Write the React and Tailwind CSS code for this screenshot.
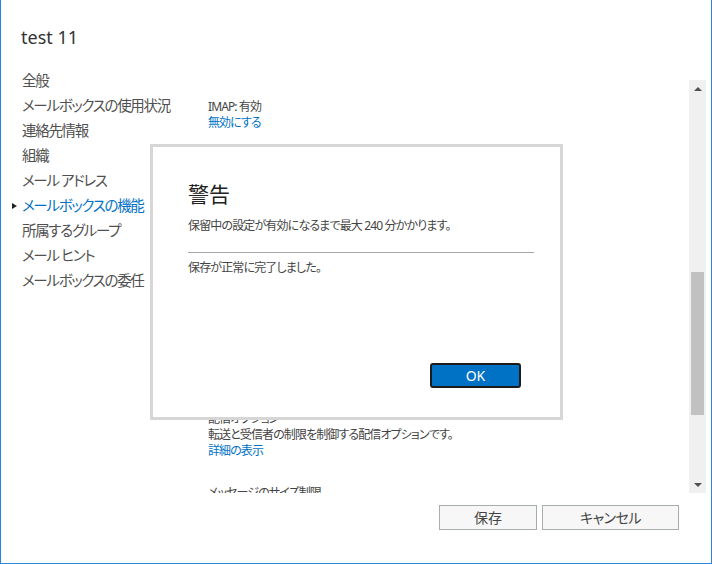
import React from "react";

const navItems = [
  "全般",
  "メールボックスの使用状況",
  "連絡先情報",
  "組織",
  "メール アドレス",
  "メールボックスの機能",
  "所属するグループ",
  "メール ヒント",
  "メールボックスの委任",
];

const ACTIVE = "メールボックスの機能";

export default function App() {
  return (
    <div
      className="relative w-[712px] h-[564px] overflow-hidden bg-white border-l border-r border-b border-[#2b88d8] text-[#444] [font-feature-settings:'palt']"
      style={{ fontFamily: '"Segoe UI", "Noto Sans", "Noto Sans CJK JP", sans-serif' }}
    >
      <div className="mt-[25px] pl-[20px] h-[24px] text-[18px] leading-[24px] text-[#333]">
        test 11
      </div>

      <div className="flex mt-[19px]">
        <ul className="w-[207px] shrink-0">
          {navItems.map((item) => (
            <li key={item} className="flex items-center h-[25px] text-[14.5px] leading-[25px] tracking-[-1.3px]">
              <span className="w-[21px] shrink-0 flex items-center pl-[11px]">
                {item === ACTIVE && (
                  <span className="block w-0 h-0 border-y-[3.5px] border-y-transparent border-l-[5px] border-l-[#222]" />
                )}
              </span>
              <span className={item === ACTIVE ? "text-[#0072c6]" : "text-[#505050]"}>{item}</span>
            </li>
          ))}
        </ul>

        <div className="mt-[12px] flex w-[498px] h-[413px] shrink-0">
          <div className="flex-1 overflow-hidden text-[12px] leading-[16px] tracking-[-0.9px] text-[#444]">
            <div className="pt-[19px]">
              <div>IMAP: 有効</div>
              <div className="text-[#0072c6]">無効にする</div>
            </div>
            <div className="h-[280px]" />
            <div>配信オプション</div>
            <div>転送と受信者の制限を制御する配信オプションです。</div>
            <div className="text-[#0072c6]">詳細の表示</div>
            <div className="mt-[26px]">メッセージのサイズ制限</div>
          </div>

          <div className="w-[17px] shrink-0 bg-[#f0f0f0] flex flex-col items-center">
            <div className="h-[17px] w-full flex items-center justify-center">
              <span className="block w-0 h-0 border-x-[4px] border-x-transparent border-b-[4px] border-b-[#505050]" />
            </div>
            <div className="h-[175px]" />
            <div className="w-[13px] h-[143px] bg-[#c1c1c1]" />
            <div className="flex-1" />
            <div className="h-[17px] w-full flex items-center justify-center">
              <span className="block w-0 h-0 border-x-[4px] border-x-transparent border-t-[4px] border-t-[#505050]" />
            </div>
          </div>
        </div>
      </div>

      <div className="flex justify-end gap-[5px] mt-[12px] pr-[32px]">
        <button className="w-[98px] h-[25px] bg-[#f7f7f7] border border-[#a7adad] text-[14px] leading-[20px] text-[#444]">
          保存
        </button>
        <button className="w-[137px] h-[25px] bg-[#f7f7f7] border border-[#a7adad] text-[14px] leading-[20px] tracking-[-0.5px] text-[#444]">
          キャンセル
        </button>
      </div>

      {/* modal */}
      <div className="absolute left-[149px] top-[144px] w-[413px] h-[276px] bg-white border-[3px] border-[#d6d6d6]">
        <div className="pl-[35px] pr-[26px] pt-[33px]">
          <div className="text-[21px] leading-[28px] text-[#222]">警告</div>
          <div className="mt-[10px] text-[12px] leading-[16px] tracking-[-0.85px] text-[#444]">
            保留中の設定が有効になるまで最大 240 分かかります。
          </div>
          <div className="mt-[18px] h-px bg-[#a6a6a6]" />
          <div className="mt-[7px] text-[12px] leading-[16px] tracking-[-0.85px] text-[#444]">保存が正常に完了しました。</div>
          <div className="flex justify-end mt-[87px] pr-[13px]">
            <button className="w-[91px] h-[25px] rounded-[3px] border-2 border-[#1b1b1b] bg-[#0072c6] text-white text-[14px] leading-[20px]">
              OK
            </button>
          </div>
        </div>
      </div>
    </div>
  );
}
